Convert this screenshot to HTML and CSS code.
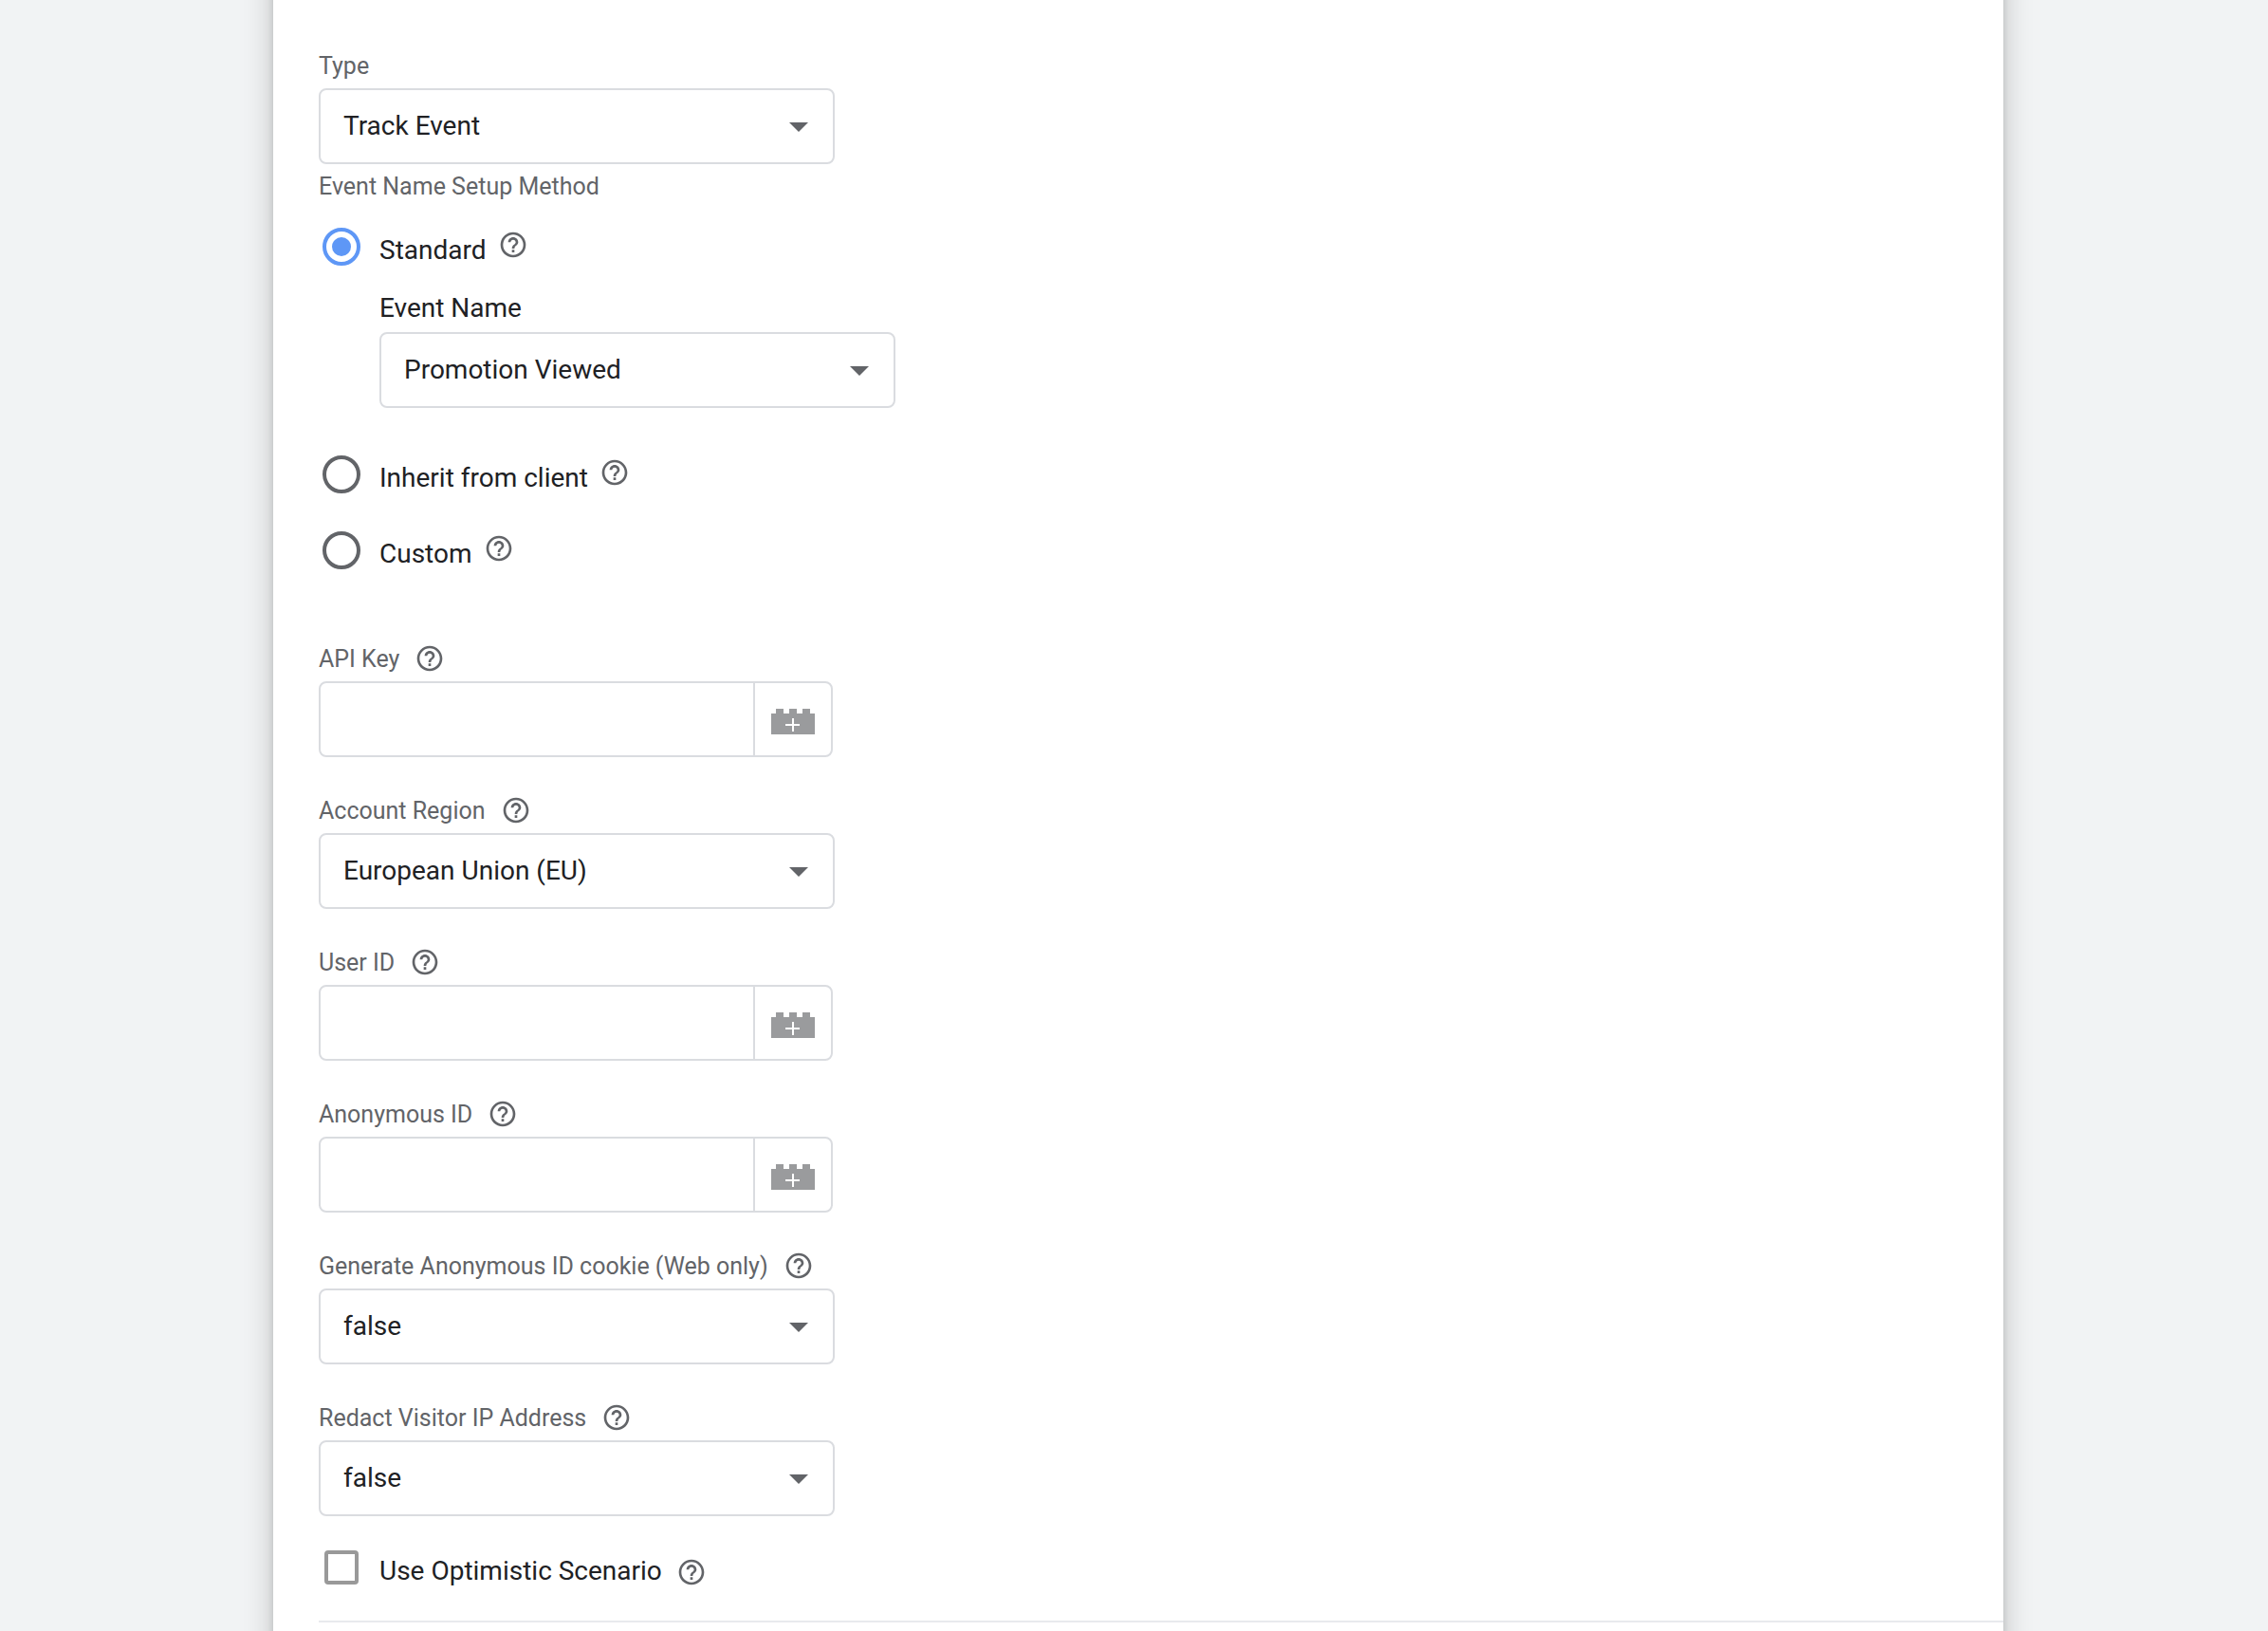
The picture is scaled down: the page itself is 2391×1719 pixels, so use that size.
FILE: index.html
```html
<!DOCTYPE html>
<html lang="en">
<head>
    <meta charset="UTF-8">
    <meta name="viewport" content="width=device-width, initial-scale=1.0">
    <title>Tag Configuration</title>
    <link rel="stylesheet" href="styles.css">
</head>
<body>
    <!-- shared icons -->
    <svg class="sprite" aria-hidden="true">
        <symbol id="icon-help" viewBox="0 0 24 24">
            <path d="M11 18h2v-2h-2v2zm1-16C6.48 2 2 6.48 2 12s4.48 10 10 10 10-4.48 10-10S17.52 2 12 2zm0 18c-4.41 0-8-3.59-8-8s3.59-8 8-8 8 3.59 8 8-3.59 8-8 8zm0-14c-2.21 0-4 1.79-4 4h2c0-1.1.9-2 2-2s2 .9 2 2c0 2-3 1.75-3 5h2c0-2.25 3-2.5 3-5 0-2.21-1.79-4-4-4z"/>
        </symbol>
        <symbol id="icon-variable" viewBox="0 0 46 28">
            <path d="M0 5h5V0h8v5h6V0h8v5h6V0h8v5h5v22H0z"/>
            <path d="M23 10v14M15 17h15" stroke="#fff" stroke-width="2"/>
        </symbol>
    </svg>

    <div class="page">
        <form class="panel">
            <div class="field">
                <div class="field-label"><label for="type">Type</label></div>
                <select id="type" class="select">
                    <option>Track Event</option>
                </select>
            </div>

            <div class="radio-group" role="radiogroup" aria-labelledby="method-label">
                <div class="field-label" id="method-label">Event Name Setup Method</div>

                <div class="choice">
                    <input type="radio" name="method" id="standard" checked>
                    <label for="standard">Standard</label>
                    <button type="button" class="help" aria-label="Help"><svg><use href="#icon-help"/></svg></button>
                </div>
                <div class="nested">
                    <label class="nested-label" for="event-name">Event Name</label>
                    <select id="event-name" class="select">
                        <option>Promotion Viewed</option>
                    </select>
                </div>
                <div class="choice">
                    <input type="radio" name="method" id="inherit">
                    <label for="inherit">Inherit from client</label>
                    <button type="button" class="help" aria-label="Help"><svg><use href="#icon-help"/></svg></button>
                </div>
                <div class="choice">
                    <input type="radio" name="method" id="custom">
                    <label for="custom">Custom</label>
                    <button type="button" class="help" aria-label="Help"><svg><use href="#icon-help"/></svg></button>
                </div>
            </div>

            <div class="fields">
                <div class="field">
                    <div class="field-label">
                        <label for="api-key">API Key</label>
                        <button type="button" class="help" aria-label="Help"><svg><use href="#icon-help"/></svg></button>
                    </div>
                    <div class="text-box">
                        <input type="text" id="api-key">
                        <button type="button" class="variable" aria-label="Insert variable"><svg><use href="#icon-variable"/></svg></button>
                    </div>
                </div>

                <div class="field">
                    <div class="field-label">
                        <label for="region">Account Region</label>
                        <button type="button" class="help" aria-label="Help"><svg><use href="#icon-help"/></svg></button>
                    </div>
                    <select id="region" class="select">
                        <option>European Union (EU)</option>
                    </select>
                </div>

                <div class="field">
                    <div class="field-label">
                        <label for="user-id">User ID</label>
                        <button type="button" class="help" aria-label="Help"><svg><use href="#icon-help"/></svg></button>
                    </div>
                    <div class="text-box">
                        <input type="text" id="user-id">
                        <button type="button" class="variable" aria-label="Insert variable"><svg><use href="#icon-variable"/></svg></button>
                    </div>
                </div>

                <div class="field">
                    <div class="field-label">
                        <label for="anonymous-id">Anonymous ID</label>
                        <button type="button" class="help" aria-label="Help"><svg><use href="#icon-help"/></svg></button>
                    </div>
                    <div class="text-box">
                        <input type="text" id="anonymous-id">
                        <button type="button" class="variable" aria-label="Insert variable"><svg><use href="#icon-variable"/></svg></button>
                    </div>
                </div>

                <div class="field">
                    <div class="field-label">
                        <label for="cookie">Generate Anonymous ID cookie (Web only)</label>
                        <button type="button" class="help" aria-label="Help"><svg><use href="#icon-help"/></svg></button>
                    </div>
                    <select id="cookie" class="select">
                        <option>false</option>
                        <option>true</option>
                    </select>
                </div>

                <div class="field">
                    <div class="field-label">
                        <label for="redact">Redact Visitor IP Address</label>
                        <button type="button" class="help" aria-label="Help"><svg><use href="#icon-help"/></svg></button>
                    </div>
                    <select id="redact" class="select">
                        <option>false</option>
                        <option>true</option>
                    </select>
                </div>
            </div>

            <div class="choice choice-check">
                <input type="checkbox" id="optimistic">
                <label for="optimistic">Use Optimistic Scenario</label>
                <button type="button" class="help" aria-label="Help"><svg><use href="#icon-help"/></svg></button>
            </div>
            <hr>
        </form>
    </div>
</body>
</html>
```

FILE: styles.css
```css
* {
    box-sizing: border-box;
}

body {
    margin: 0;
    background-color: #f1f3f4;
    color: #202124;
    font-family: Roboto, sans-serif;
    font-size: 28px;
}

.sprite {
    display: none;
}

.page {
    min-height: 100vh;
    padding: 0 279px 0 288px;
    overflow: hidden;
}

/* runs past the top and bottom so the side shadows stay even */
.panel {
    margin: -40px 0;
    padding: 85px 0 60px 48px;
    background-color: #fff;
    box-shadow: 0 0 30px rgba(0, 0, 0, 0.2), 0 0 8px rgba(0, 0, 0, 0.12);
}

.field-label {
    display: flex;
    align-items: center;
    gap: 16px;
    height: 48px;
    color: #626468;
    font-size: 25px;
}

.select {
    display: block;
    width: 544px;
    height: 80px;
    padding: 0 60px 2px 24px;
    border: 2px solid #dadce0;
    border-radius: 8px;
    color: #202124;
    font: inherit;
    appearance: none;
    background: #fff url("data:image/svg+xml,%3Csvg xmlns='http://www.w3.org/2000/svg' width='20' height='12'%3E%3Cpath d='M0 2h20L10 12z' fill='%23626468'/%3E%3C/svg%3E") no-repeat right 26px center;
}

.text-box {
    display: flex;
    width: 542px;
    height: 80px;
    border: 2px solid #dadce0;
    border-radius: 8px;
    overflow: hidden;
}

.text-box input {
    flex: 1;
    min-width: 0;
    padding: 0 24px;
    border: none;
    background: none;
    font: inherit;
}

.variable {
    width: 82px;
    padding: 6px 0 0;
    border: none;
    border-left: 2px solid #dadce0;
    background: none;
    color: #9a9b9d;
}

.variable svg {
    display: block;
    width: 46px;
    height: 28px;
    margin: 0 auto;
    fill: currentColor;
}

.help {
    padding: 0;
    border: none;
    background: none;
    color: #626468;
    cursor: pointer;
}

.help svg {
    display: block;
    width: 32px;
    height: 32px;
    fill: currentColor;
}

.radio-group {
    margin-top: -1px;
}

.choice {
    display: flex;
    align-items: center;
    height: 80px;
    padding-left: 4px;
}

.choice input {
    appearance: none;
    display: grid;
    place-items: center;
    width: 40px;
    height: 40px;
    margin: 0 20px 0 0;
    border: 4px solid #626468;
    border-radius: 50%;
}

.choice input:checked {
    border-color: #5e97f6;
}

.choice input:checked::before {
    content: "";
    width: 20px;
    height: 20px;
    border-radius: 50%;
    background-color: #5e97f6;
}

.choice label {
    padding-top: 6px;
}

.choice .help {
    margin: 0 0 4px 12px;
}

.nested {
    padding: 0 0 30px 64px;
}

.nested-label {
    display: block;
    line-height: 50px;
}

.fields {
    display: grid;
    gap: 32px;
    margin-top: 50px;
}

.choice-check {
    margin: 14px 0 16px;
    padding-left: 6px;
}

.choice-check input {
    width: 36px;
    height: 36px;
    margin-right: 22px;
    border-color: #999;
    border-radius: 4px;
}

.choice-check .help {
    margin: 10px 0 0 15px;
}

hr {
    height: 2px;
    margin: 0;
    border: none;
    background-color: #e8eaed;
}
```
